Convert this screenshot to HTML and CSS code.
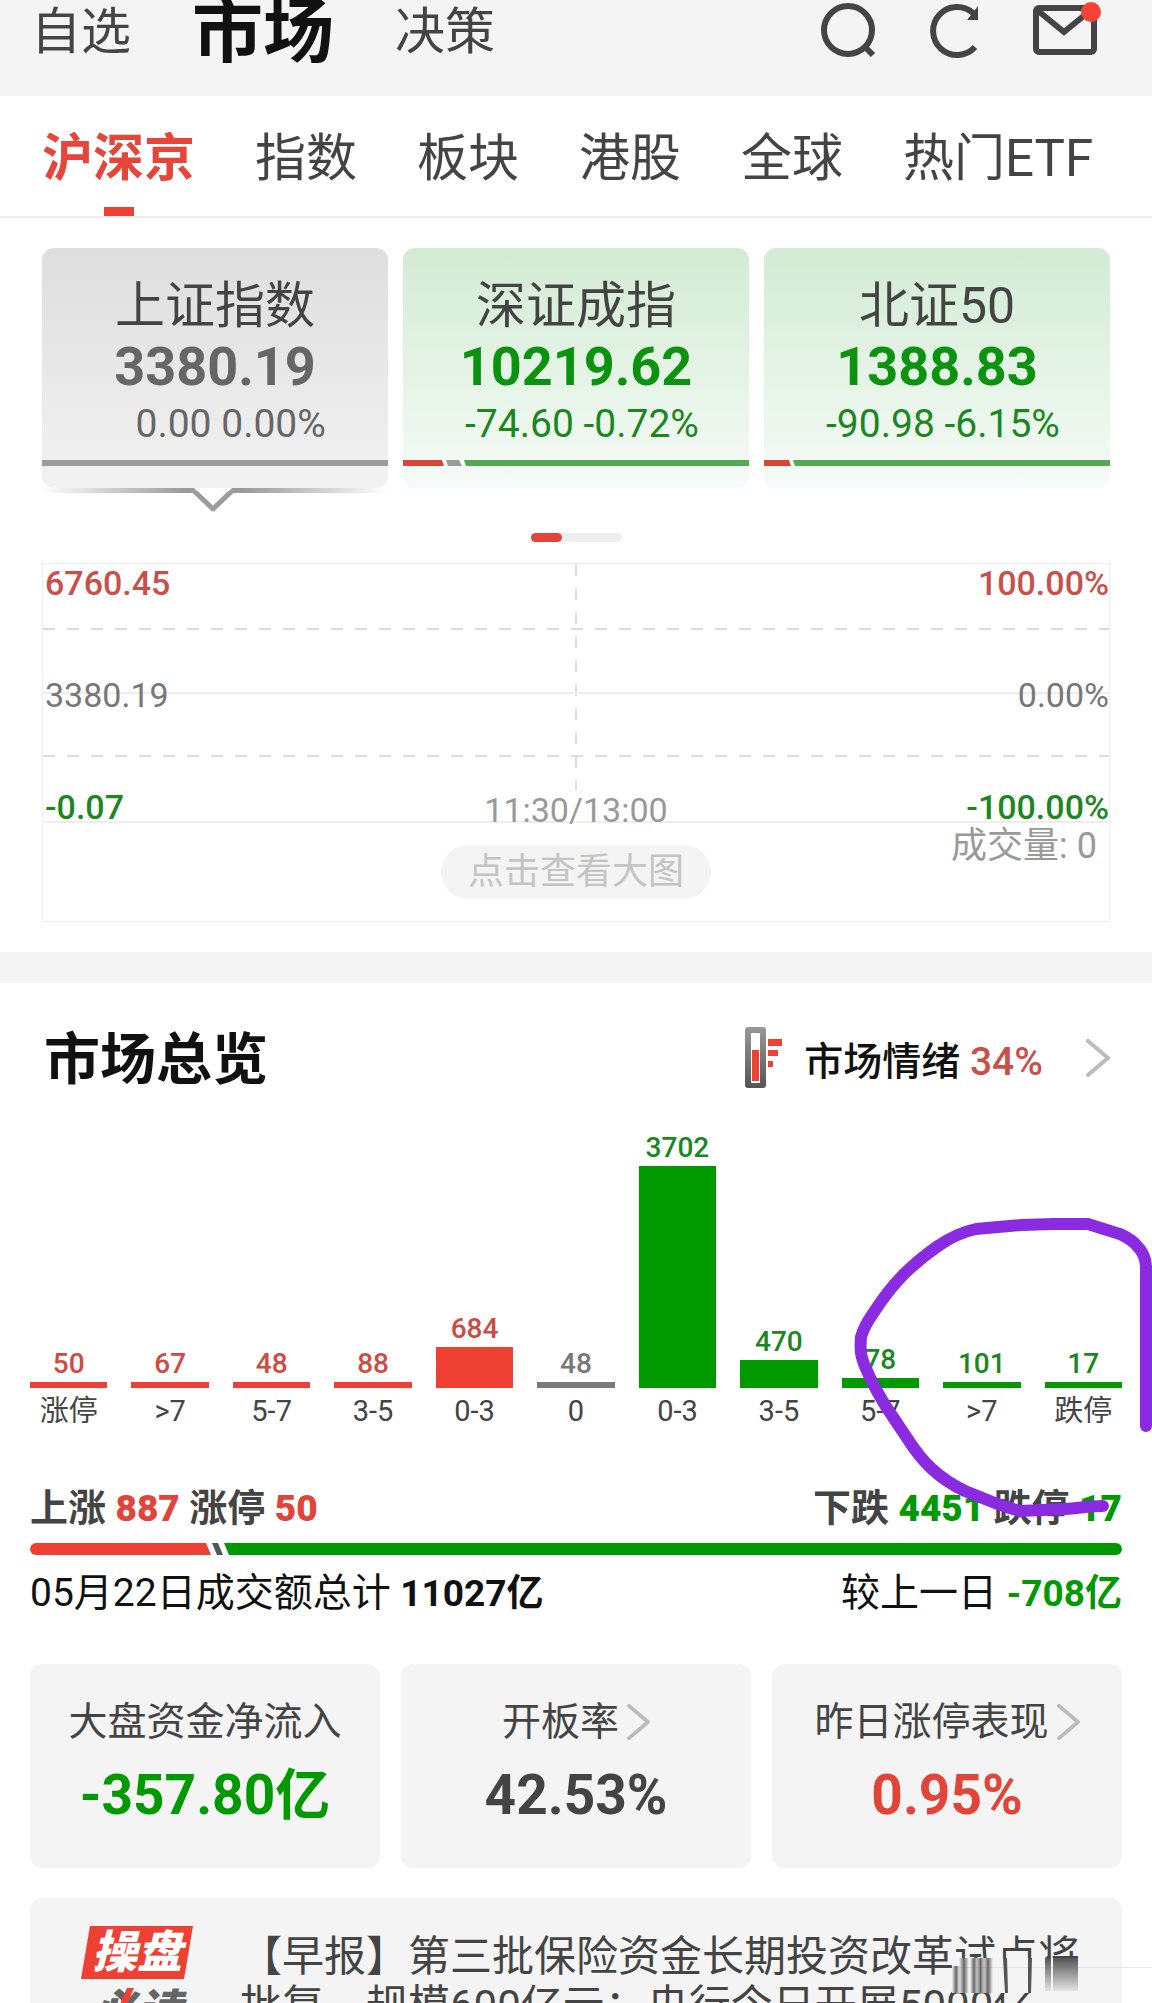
FILE: index.html
```html
<!DOCTYPE html>
<html lang="zh-CN">
<head>
    <meta charset="UTF-8">
    <meta name="viewport" content="width=device-width, initial-scale=1">
    <title>市场</title>
    <link rel="stylesheet" href="styles.css">
</head>

<body>

    <header class="topbar">
        <nav class="main-nav">
            <a href="#">自选</a>
            <a href="#" class="current">市场</a>
            <a href="#">决策</a>
        </nav>
        <div class="tools">
            <button type="button" aria-label="搜索">
                <svg width="56" height="56" viewBox="0 0 56 56"><circle cx="27" cy="28" r="24"/><path d="M43 44l9 9"/></svg>
            </button>
            <button type="button" aria-label="刷新">
                <svg width="50" height="56" viewBox="0 0 50 56"><path d="M45 45A24 24 0 1 1 43 11"/><path class="solid" d="M48 4v14H37z"/></svg>
            </button>
            <button type="button" class="mail" aria-label="消息">
                <svg width="64" height="56" viewBox="0 0 64 56"><rect x="3" y="6" width="58" height="44" rx="3"/><path d="M4 8l27 22L58 8"/></svg>
                <span class="dot"></span>
            </button>
        </div>
    </header>

    <nav class="tabs">
        <a href="#" class="active">沪深京</a>
        <a href="#">指数</a>
        <a href="#">板块</a>
        <a href="#">港股</a>
        <a href="#">全球</a>
        <a href="#">热门ETF</a>
    </nav>

    <section class="indexes">
        <div class="index-cards">
            <a href="#" class="index-card flat selected">
                <span class="name">上证指数</span>
                <span class="price">3380.19</span>
                <span class="change">&nbsp;&nbsp;0.00 0.00%</span>
                <svg class="ratio" viewBox="0 0 346 6" preserveAspectRatio="none"><path fill="#9c9c9c" d="M0 0h346v6H0z"/></svg>
                <svg class="pointer" viewBox="0 0 346 26" preserveAspectRatio="none">
                    <defs>
                        <linearGradient id="edge">
                            <stop offset="0" stop-color="#999" stop-opacity="0"/>
                            <stop offset=".42" stop-color="#999"/>
                            <stop offset=".58" stop-color="#999"/>
                            <stop offset="1" stop-color="#999" stop-opacity="0"/>
                        </linearGradient>
                    </defs>
                    <path fill="url(#edge)" d="M0 0H346V5H0z"/>
                    <path fill="#fff" stroke="#9c9c9c" stroke-width="5" stroke-linejoin="round" d="M150 1L171 21L192 1"/>
                    <path fill="#fff" d="M152 0h38l-3 3h-32z"/>
                </svg>
            </a>
            <a href="#" class="index-card down">
                <span class="name">深证成指</span>
                <span class="price">10219.62</span>
                <span class="change">-74.60 -0.72%</span>
                <svg class="ratio" viewBox="0 0 346 6" preserveAspectRatio="none">
                    <path fill="#fff" d="M0 0h70v6H0z"/>
                    <path fill="#db4437" d="M0 0h39l2 6H0z"/>
                    <path fill="#9c9c9c" d="M43 0h13l3 6H45z"/>
                    <path fill="#55a855" d="M61 0h285v6H63z"/>
                </svg>
            </a>
            <a href="#" class="index-card down">
                <span class="name">北证50</span>
                <span class="price">1388.83</span>
                <span class="change">-90.98 -6.15%</span>
                <svg class="ratio" viewBox="0 0 346 6" preserveAspectRatio="none">
                    <path fill="#fff" d="M0 0h40v6H0z"/>
                    <path fill="#db4437" d="M0 0h25l2 6H0z"/>
                    <path fill="#55a855" d="M29 0h317v6H31z"/>
                </svg>
            </a>
        </div>

        <div class="pager"><span></span></div>

        <div class="chart">
            <div class="plot">
                <div class="scale">
                    <span class="red">6760.45</span>
                    <span>3380.19</span>
                    <span class="green">-0.07</span>
                </div>
                <div class="scale right">
                    <span class="red">100.00%</span>
                    <span>0.00%</span>
                    <span class="green">-100.00%</span>
                </div>
                <span class="time">11:30/13:00</span>
            </div>
            <div class="volume">
                <button type="button">点击查看大图</button>
                <span>成交量: 0</span>
            </div>
        </div>
    </section>

    <section class="overview">
        <div class="overview-head">
            <h2>市场总览</h2>
            <a href="#" class="mood">
                <svg class="thermo" width="38" height="62" viewBox="0 0 38 62">
                    <defs>
                        <linearGradient id="tube" x2="0" y2="1">
                            <stop offset="0" stop-color="#999"/>
                            <stop offset="1" stop-color="#555"/>
                        </linearGradient>
                    </defs>
                    <rect width="21" height="61" rx="3" fill="url(#tube)"/>
                    <rect x="6" y="6" width="9" height="50" rx="1" fill="#fff"/>
                    <path fill="#ee4033" d="M7 23h7v31H7zM23 12h14v7H23zM23 23h10v6H23zM23 34h5v6h-5z"/>
                </svg>
                <span>市场情绪 <b>34%</b></span>
                <svg class="chevron" width="24" height="38" viewBox="0 0 24 38"><path d="M2 2l20 17L2 36"/></svg>
            </a>
        </div>

        <div class="bars">
            <div class="bar up"><b>50</b><i style="height: 6px"></i><span>涨停</span></div>
            <div class="bar up"><b>67</b><i style="height: 6px"></i><span>&gt;7</span></div>
            <div class="bar up"><b>48</b><i style="height: 6px"></i><span>5-7</span></div>
            <div class="bar up"><b>88</b><i style="height: 6px"></i><span>3-5</span></div>
            <div class="bar up"><b>684</b><i style="height: 41px"></i><span>0-3</span></div>
            <div class="bar"><b>48</b><i style="height: 6px"></i><span>0</span></div>
            <div class="bar fall"><b>3702</b><i style="height: 222px"></i><span>0-3</span></div>
            <div class="bar fall"><b>470</b><i style="height: 28px"></i><span>3-5</span></div>
            <div class="bar fall"><b>78</b><i style="height: 10px"></i><span>5-7</span></div>
            <div class="bar fall"><b>101</b><i style="height: 6px"></i><span>&gt;7</span></div>
            <div class="bar fall"><b>17</b><i style="height: 6px"></i><span>跌停</span></div>
        </div>

        <div class="line counts">
            <span>上涨 <b class="red">887</b> 涨停 <b class="red">50</b></span>
            <span>下跌 <b class="green">4451</b> 跌停 <b class="green">17</b></span>
        </div>
        <svg class="split" viewBox="0 0 1092 12" preserveAspectRatio="none">
            <path fill="#ee4033" d="M6 0H176L181 12H6A6 6 0 0 1 6 0z"/>
            <path fill="#555" d="M182 0h6l5 12h-6z"/>
            <path fill="#090" d="M194 0H1086A6 6 0 0 1 1086 12H199z"/>
        </svg>
        <div class="line turnover">
            <span>05月22日成交额总计 <b>11027亿</b></span>
            <span>较上一日 <b class="green">-708亿</b></span>
        </div>

        <div class="stats">
            <div class="stat">
                <span class="label">大盘资金净流入</span>
                <b class="green">-357.80亿</b>
            </div>
            <a href="#" class="stat">
                <span class="label">开板率<svg class="chevron" width="23" height="36" viewBox="0 0 24 38"><path d="M2 2l20 17L2 36"/></svg></span>
                <b>42.53%</b>
            </a>
            <a href="#" class="stat">
                <span class="label">昨日涨停表现<svg class="chevron" width="23" height="36" viewBox="0 0 24 38"><path d="M2 2l20 17L2 36"/></svg></span>
                <b class="red">0.95%</b>
            </a>
        </div>

        <a href="#" class="news">
            <span class="badge">
                <span class="badge-top">操盘</span>
                <span class="badge-bottom">必读</span>
                <svg class="tick" width="20" height="30" viewBox="0 0 20 30"><path d="M13 0h7L7 30H0z"/></svg>
            </span>
            <span class="headline">【早报】第三批保险资金长期投资改革试点将批复，规模600亿元；央行今日开展5000亿...</span>
            <svg class="smudge" width="200" height="35" viewBox="0 0 200 35">
                <defs>
                    <linearGradient id="fade" x2="0" y2="1">
                        <stop offset="0" stop-color="#555"/>
                        <stop offset="1" stop-color="#555" stop-opacity=".1"/>
                    </linearGradient>
                    <linearGradient id="streak">
                        <stop offset="0" stop-color="#666" stop-opacity="0"/>
                        <stop offset=".5" stop-color="#666"/>
                        <stop offset="1" stop-color="#666" stop-opacity="0"/>
                    </linearGradient>
                </defs>
                <path fill="#f4f4f4" d="M0 0h130v35H0z"/>
                <path fill="#e6e6e6" d="M0 9h200v1H0z"/>
                <path fill="url(#streak)" d="M0 8h8v27H0z"/>
                <path fill="url(#streak)" d="M7 0h10v35H7z"/>
                <path fill="url(#streak)" d="M18 0h8v35h-8z"/>
                <path fill="url(#streak)" d="M24 0h9v35h-9z"/>
                <path fill="url(#streak)" d="M31 0h10v35H31z"/>
                <path fill="#555" d="M51 0h4l1 35h-3zM76 0h4l-1 35h-3z"/>
                <path fill="url(#fade)" d="M93 0h6v33h-6zM101 0h25v33h-25z"/>
            </svg>
        </a>

        <svg class="marker" width="302" height="306" viewBox="850 1215 302 306">
            <path d="M1103 1506C1090 1506 1080 1508 1065 1509L1020 1511Q1008 1508 995 1503L965 1491Q946 1482 932 1469C920 1458 914 1449 907 1438L885 1405Q872 1383 868 1373C860 1357 860 1350 861 1337Q864 1326 874 1312C883 1298 893 1285 905 1273Q922 1257 938 1246Q957 1233 976 1229L1022 1225L1053 1224H1088L1120 1234Q1133 1240 1138 1247Q1145 1254 1146 1266V1426"/>
        </svg>
    </section>

</body>
</html>
```

FILE: styles.css
```css
* {
    box-sizing: border-box;
}
body {
    margin: 0;
    height: 100vh;
    overflow: hidden;
    background-color: #fff;
    color: #444;
    font-family: Roboto, "Noto Sans CJK SC", sans-serif;
}
a {
    color: inherit;
    text-decoration: none;
}
button {
    border: 0;
    padding: 0;
    background: none;
    font-family: inherit;
}
svg {
    display: block;
}
.red {
    color: #e2443a;
}
.green {
    color: #090;
}

/* top bar */
.topbar {
    display: flex;
    justify-content: space-between;
    height: 96px;
    padding: 0 55px 0 31px;
    background-color: #f4f4f4;
}
.main-nav {
    display: flex;
    align-items: center;
    gap: 61px;
    height: 64px;
    font-size: 50px;
    line-height: 64px;
}
.main-nav .current {
    color: #111;
    font-size: 71px;
    font-weight: bold;
}
.tools {
    display: flex;
    align-items: center;
    gap: 53px;
    height: 60px;
}
.tools svg {
    fill: none;
    stroke: #444;
    stroke-width: 6;
}
.tools .solid {
    fill: #444;
    stroke: none;
}
.mail {
    position: relative;
}
.dot {
    position: absolute;
    top: 0;
    right: -4px;
    width: 20px;
    height: 20px;
    border-radius: 50%;
    background-color: #f44336;
}

/* tabs */
.tabs {
    display: flex;
    gap: 60px;
    height: 122px;
    padding: 0 42px;
    border-bottom: 2px solid #eee;
    font-size: 51px;
    line-height: 126px;
    white-space: nowrap;
}
.tabs a {
    height: 120px;
}
.tabs .active {
    color: #e8453a;
    font-weight: bold;
    position: relative;
}
.tabs .active::after {
    content: "";
    position: absolute;
    bottom: 0;
    left: 50%;
    width: 30px;
    height: 9px;
    margin-left: -15px;
    background-color: #ee4033;
}

/* index cards */
.indexes {
    padding: 30px 42px;
    border-bottom: 31px solid #f4f4f4;
}
.index-cards {
    display: grid;
    grid-template-columns: repeat(3, 1fr);
    gap: 15px;
}
.index-card {
    position: relative;
    display: flex;
    flex-direction: column;
    padding: 28px 0 22px;
    border-radius: 12px;
    text-align: center;
}
.index-card.flat {
    background: linear-gradient(#dedede, #f2f2f2);
}
.index-card.down {
    background: linear-gradient(#d2ebd4, #f6fbf7);
}
.name {
    font-size: 50px;
    line-height: 60px;
}
.price {
    font-size: 54px;
    font-weight: bold;
    line-height: 62px;
}
.change {
    padding-left: 12px;
    font-size: 39px;
    line-height: 52px;
}
.flat .price,
.flat .change {
    color: #666;
}
.down .price {
    color: #0b9310;
}
.down .change {
    color: #1c871f;
}
.ratio {
    width: 100%;
    height: 6px;
    margin-top: 10px;
}
.pointer {
    position: absolute;
    top: 100%;
    left: 0;
    width: 100%;
    height: 26px;
}
.pager {
    width: 91px;
    height: 9px;
    margin: 45px auto 21px;
    border-radius: 5px;
    background-color: #eee;
}
.pager span {
    display: block;
    width: 31px;
    height: 9px;
    border-radius: 5px;
    background-color: #e2443a;
}

/* minute chart */
.chart {
    border: 1px solid #eee;
    color: #777;
    font-size: 34px;
    line-height: 38px;
}
.plot {
    position: relative;
    height: 259px;
    border-bottom: 2px solid #eee;
    background:
        repeating-linear-gradient(to right, #ddd 0 12px, transparent 12px 24px) 0 25% / 100% 2px no-repeat,
        linear-gradient(#eee, #eee) 0 50% / 100% 2px no-repeat,
        repeating-linear-gradient(to right, #ddd 0 12px, transparent 12px 24px) 0 75% / 100% 2px no-repeat,
        repeating-linear-gradient(#ddd 0 12px, transparent 12px 24px) 50% 0 / 2px 226px no-repeat;
}
.scale {
    position: absolute;
    top: 0;
    bottom: -5px;
    left: 2px;
    display: flex;
    flex-direction: column;
    justify-content: space-between;
}
.scale.right {
    left: auto;
    right: 0;
    text-align: right;
}
.scale .red,
.scale .green {
    font-weight: 500;
}
.scale .red {
    color: #c9504a;
}
.scale .green {
    color: #1c871f;
}
.time {
    position: absolute;
    left: 0;
    right: 0;
    bottom: -8px;
    color: #999;
    text-align: center;
}
.volume {
    position: relative;
    display: flex;
    align-items: center;
    justify-content: center;
    height: 98px;
}
.volume button {
    padding: 0 27px;
    border-radius: 27px;
    background-color: #f4f4f4;
    color: #c4c4c4;
    font-size: 36px;
    line-height: 54px;
}
.volume span {
    position: absolute;
    top: 4px;
    right: 12px;
    color: #999;
    font-size: 36px;
}

/* market overview */
.overview {
    position: relative;
    padding: 36px 30px 0;
}
.overview-head {
    display: flex;
    align-items: center;
    justify-content: space-between;
    height: 78px;
    padding: 0 12px 0 14px;
}
h2 {
    margin: 0;
    padding-top: 4px;
    color: #111;
    font-size: 56px;
    line-height: 78px;
}
.mood {
    display: flex;
    align-items: center;
    color: #111;
    font-size: 39px;
    font-weight: 500;
}
.mood b {
    color: #c9504a;
    font-weight: 500;
}
.thermo {
    margin-right: 21px;
}
.chevron {
    fill: none;
    stroke: #bbb;
    stroke-width: 4;
    stroke-linecap: round;
    stroke-linejoin: round;
}
.mood .chevron {
    margin-left: 43px;
}
.bars {
    display: grid;
    grid-template-columns: repeat(11, 1fr);
    gap: 24px;
    align-items: end;
    height: 337px;
}
.bar {
    display: flex;
    flex-direction: column;
    color: #777;
    text-align: center;
}
.bar b {
    font-size: 28px;
    font-weight: 500;
    line-height: 36px;
}
.bar i {
    background-color: #7c7c7c;
}
.bar span {
    color: #444;
    font-size: 29px;
    line-height: 46px;
}
.bar.up b {
    color: #cf4a42;
}
.bar.up i {
    background-color: #ee4033;
}
.bar.fall b {
    color: #1c871f;
}
.bar.fall i {
    background-color: #090;
}
.line {
    display: flex;
    justify-content: space-between;
    font-size: 38px;
    line-height: 50px;
}
.line b {
    font-size: 37px;
}
.counts {
    margin-top: 49px;
    font-weight: bold;
}
.split {
    width: 100%;
    height: 12px;
    margin: 9px 0 13px;
}
.turnover {
    color: #111;
    font-size: 39px;
}
.stats {
    display: grid;
    grid-template-columns: repeat(3, 1fr);
    gap: 21px;
    margin-top: 45px;
}
.stat {
    height: 204px;
    padding-top: 32px;
    border-radius: 12px;
    background-color: #f4f4f4;
    text-align: center;
}
.label {
    display: flex;
    align-items: center;
    justify-content: center;
    gap: 8px;
    font-size: 39px;
    line-height: 52px;
}
.stat b {
    display: block;
    margin-top: 14px;
    font-size: 55px;
    line-height: 66px;
}

/* news */
.news {
    position: relative;
    display: flex;
    gap: 47px;
    margin-top: 30px;
    padding: 28px 40px 28px 51px;
    border-radius: 12px;
    background-color: #f4f4f4;
}
.badge {
    position: relative;
    flex: none;
    width: 112px;
    font-size: 45px;
    font-style: italic;
    font-weight: 900;
    line-height: 53px;
    text-align: center;
}
.badge span {
    display: block;
}
.badge-top {
    background-color: #ee4033;
    clip-path: polygon(8% 0, 100% 0, 92% 100%, 0 100%);
    color: #fff;
}
.badge-bottom {
    margin-top: 6px;
    color: #666;
}
.tick {
    position: absolute;
    top: 62px;
    left: 33px;
    fill: #ee4033;
}
.headline {
    padding-top: 6px;
    font-size: 42px;
    line-height: 49px;
}
.smudge {
    position: absolute;
    top: 60px;
    right: -30px;
}

/* hand-drawn mark over the falling bars */
.marker {
    position: absolute;
    top: 232px;
    right: 0;
    fill: none;
    stroke: #8a2be2;
    stroke-width: 12;
    stroke-linecap: round;
}
```
